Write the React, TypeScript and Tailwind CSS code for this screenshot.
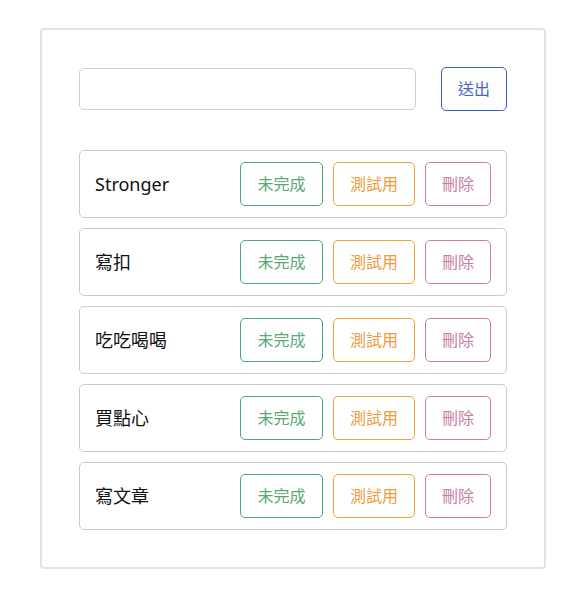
import React from "react";

const items = ["Stronger", "寫扣", "吃吃喝喝", "買點心", "寫文章"];

export default function App() {
  return (
    <div
      className="w-[582px] h-[603px] bg-white pt-[28px] pl-[40px]"
      style={{ fontFamily: '"Noto Sans", "Noto Sans CJK TC", sans-serif' }}
    >
      <div className="w-[506px] border-2 border-[#e3e3e3] rounded-[4px] p-[37px]">
        <div className="flex items-center justify-between mb-[39px]">
          <input
            type="text"
            className="w-[337px] h-[42px] border border-[#cfcfcf] rounded-[5px] outline-none px-3"
          />
          <button className="w-[66px] h-[44px] border border-[#3d5fbe] rounded-[5px] text-[#4a64c0] text-[16px] bg-white">
            送出
          </button>
        </div>
        <div className="flex flex-col gap-[10px]">
          {items.map((t) => (
            <div
              key={t}
              className="h-[68px] border border-[#cacaca] rounded-[5px] flex items-center pl-[15px] pr-[15px]"
            >
              <span className="flex-1 text-[18px] text-[#111]">{t}</span>
              <div className="flex gap-[10px]">
                <button className="w-[83px] h-[44px] border border-[#4aa874] rounded-[5px] text-[#5aaa78] text-[16px]">
                  未完成
                </button>
                <button className="w-[82px] h-[44px] border border-[#eea33a] rounded-[5px] text-[#ee9a40] text-[16px]">
                  測試用
                </button>
                <button className="w-[66px] h-[44px] border border-[#d279a8] rounded-[5px] text-[#c77fa3] text-[16px]">
                  刪除
                </button>
              </div>
            </div>
          ))}
        </div>
      </div>
    </div>
  );
}
